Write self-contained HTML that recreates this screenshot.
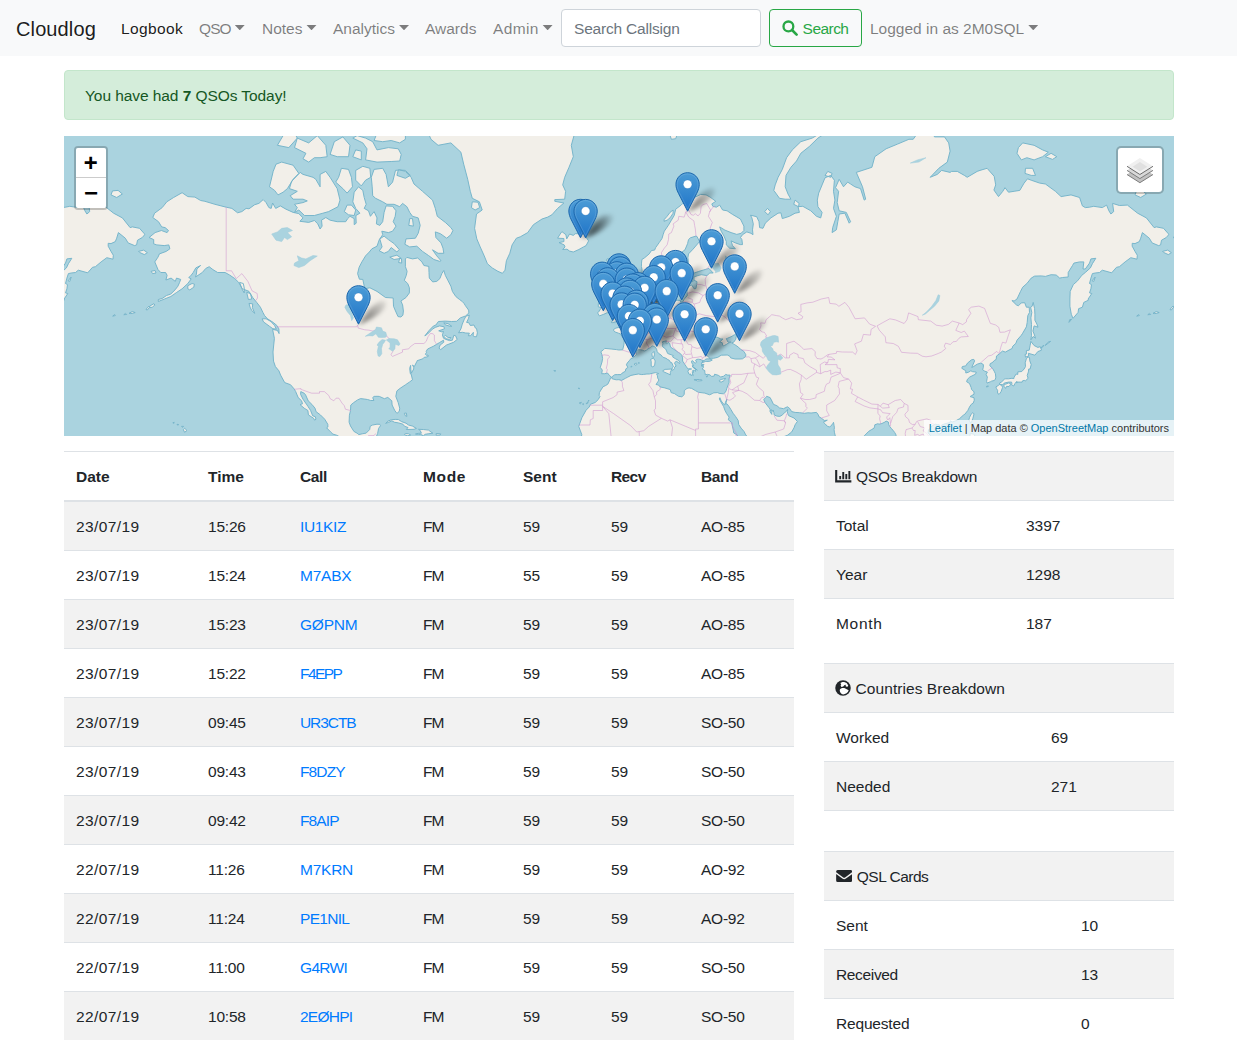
<!DOCTYPE html>
<html lang="en">
<head>
<meta charset="utf-8">
<title>Cloudlog</title>
<style>
*{box-sizing:border-box}
html,body{margin:0;padding:0}
body{width:1237px;height:1063px;overflow:hidden;background:#fff;color:#212529;font-family:"Liberation Sans",sans-serif;font-size:15.5px;line-height:24px;position:relative}
a{color:#007bff;text-decoration:none}
/* navbar */
.navbar{position:absolute;left:0;top:0;width:1237px;height:56px;background:#f8f9fa}
.navbar .it{position:absolute;top:17px;height:24px;line-height:24px;white-space:nowrap;color:rgba(0,0,0,.5)}
.navbar .brand{left:16px;top:14px;height:30px;line-height:30px;font-size:20px;color:rgba(0,0,0,.9)}
.navbar .active{color:rgba(0,0,0,.9)}
.caret{display:inline-block;width:10.4px;height:5.5px;background:currentColor;clip-path:polygon(0 0,100% 0,50% 100%);vertical-align:3.8px;margin-left:3.8px;letter-spacing:0}
.search{position:absolute;left:561px;top:9px;width:200px;height:38px;border:1px solid #ced4da;border-radius:4px;background:#fff;padding:7px 12px 5px;color:#6c757d;line-height:24px;letter-spacing:-.2px}
.btn{position:absolute;left:769px;top:9px;width:93px;height:38px;border:1px solid #28a745;border-radius:4px;color:#28a745;line-height:24px;padding:7px 0 5px 0;white-space:nowrap}
.btn svg{position:absolute;left:11.5px;top:10px}
.btn span{position:absolute;left:32.6px;top:6.5px;letter-spacing:-.55px}
/* alert */
.alert{position:absolute;left:64px;top:70px;width:1110px;height:50px;border:1px solid #c3e6cb;border-radius:4px;background:#d4edda;color:#155724;padding:12.5px 20px 11px;line-height:24px}
/* map */
#map{position:absolute;left:64px;top:136px;width:1110px;height:300px;background:#aad3df;overflow:hidden}
.tiles{position:absolute;left:0;top:0}
.lf-bar{position:absolute;border:2px solid rgba(0,0,0,.2);border-radius:4px;background-clip:padding-box}
.lf-zoom{left:10px;top:10px;width:34px;height:64px}
.lf-zoom a{display:block;width:30px;height:30px;background:#fff;color:#000;text-align:center;font:bold 24px/30px "Liberation Mono","DejaVu Sans Mono",monospace;overflow:hidden}
.lf-zoom .zin{border-bottom:1px solid #ccc;border-radius:2px 2px 0 0;line-height:34px;text-indent:-.5px}
.lf-zoom .zout{border-radius:0 0 2px 2px;line-height:34px;text-indent:.6px}
.lf-layers{right:10px;top:10px;width:48px;height:48px;border-radius:5px;background-color:#fff}
.lf-layers svg{position:absolute;left:9px;top:9px}
.lf-attr{position:absolute;right:0;bottom:0;height:16px;padding:0 5px;background:rgba(255,255,255,.7);color:#333;font:11px/16px "Liberation Sans",sans-serif;white-space:nowrap}
.lf-attr a{color:#0078a8}
/* tables */
table{border-collapse:separate;border-spacing:0;position:absolute;table-layout:fixed}
td,th{padding:13px 12px 11px;height:49px;border-top:1px solid #dee2e6;text-align:left;vertical-align:top;line-height:24px;font-weight:400;white-space:nowrap;overflow:hidden}
th{font-weight:700;border-bottom:2px solid #dee2e6;height:51px}
tr.s td{background:#f2f2f2}
#log tr.f td{border-top:0;height:48px}
#log{left:64px;top:451px;width:730px}
#log tr:last-child td{}
.side{left:824px;width:350px}
.side tr:last-child td{}
.d{letter-spacing:.39px}.t{letter-spacing:-.22px}.fm{letter-spacing:-1px}.b{letter-spacing:-.25px}
td.e{height:1px;padding:0;line-height:0;border-top:1px solid #dee2e6}
.ic{display:inline-block;vertical-align:-1px;margin-right:1px}
.gl{vertical-align:-2.2px;margin-left:-.7px;margin-right:1.5px}.ch{margin-left:-.7px;margin-right:1.7px;vertical-align:-.6px}.en{vertical-align:0;margin-left:-.5px;margin-right:1.5px}
</style>
</head>
<body>
<div class="navbar">
  <a class="it brand" style="letter-spacing:.12px">Cloudlog</a>
  <a class="it active" style="left:121px;letter-spacing:.4px">Logbook</a>
  <a class="it" style="left:199px;letter-spacing:-.9px">QSO<span class="caret"></span></a>
  <a class="it" style="left:262px">Notes<span class="caret"></span></a>
  <a class="it" style="left:333px">Analytics<span class="caret"></span></a>
  <a class="it" style="left:425px">Awards</a>
  <a class="it" style="left:493px;letter-spacing:.34px">Admin<span class="caret"></span></a>
  <div class="search">Search Callsign</div>
  <div class="btn"><svg width="16" height="16" viewBox="0 0 16 16"><circle cx="6.4" cy="6.4" r="4.9" fill="none" stroke="#28a745" stroke-width="2.3"/><path d="M10 10 L14.6 14.6" stroke="#28a745" stroke-width="2.6" stroke-linecap="round"/></svg><span>Search</span></div>
  <a class="it" style="left:870px">Logged in as 2M0SQL<span class="caret"></span></a>
</div>
<div class="alert" style="letter-spacing:-.07px">You have had <b>7</b> QSOs Today!</div>
<div id="map">
<svg class="tiles" width="1110" height="300" viewBox="0 0 1110 300">
<defs>
<g id="world"><path fill="#f2efe9" stroke="#74b3c9" stroke-width=".95" stroke-linejoin="round" d="M85.1 101.5L91.1 96.6L97.4 94.5L103.1 96.6L104.5 94.5L101.1 91.6L97.7 90.9L94.5 85.7L88.8 81.5L90.6 77.2L98.2 71.6L102.8 65.8L109.6 61.5L118.1 56.7L123.8 60.6L130.9 61.1L136.6 64.5L140.9 65.3L150.9 68.3L162.2 71.2L167.9 72.4L173.6 76.8L177.9 75.6L182.1 72.4L185.0 72.8L190.7 68.7L194.9 67.4L199.2 63.6L202.1 66.6L204.9 71.6L207.2 72.4L208.6 67.0L211.7 72.4L216.3 69.9L222.0 73.2L229.1 76.4L234.8 77.6L239.0 81.9L235.9 85.3L244.7 86.4L250.4 84.5L253.8 87.9L256.1 93.0L258.1 90.1L257.5 84.2L261.8 81.5L266.1 84.2L273.2 85.7L281.7 85.7L283.7 82.6L286.0 80.3L290.2 82.6L290.2 88.7L292.2 87.2L291.9 79.5L295.9 77.2L291.7 72.4L288.8 65.8L290.2 56.2L294.5 50.8L298.8 54.4L300.2 61.5L302.2 68.3L300.2 72.4L304.5 74.8L306.4 80.3L310.1 75.6L313.0 81.9L312.4 87.9L315.8 89.4L318.7 85.7L320.1 76.4L322.1 69.9L328.6 70.3L332.0 74.8L331.2 80.3L329.2 85.7L332.0 90.1L328.6 95.2L324.4 96.6L317.8 95.2L318.7 98.7L315.3 103.6L313.0 110.2L307.9 112.8L305.3 116.0L301.6 119.8L297.9 125.9L295.1 131.3L293.6 137.6L295.4 143.2L298.8 143.4L300.8 152.8L305.9 151.8L313.0 155.4L321.5 161.5L329.2 162.0L329.5 170.3L331.5 175.0L334.0 180.6L336.9 181.0L338.9 179.2L339.4 175.0L338.6 168.9L336.9 165.0L342.0 161.5L345.4 156.9L345.4 151.8L343.7 147.5L340.3 144.3L342.3 139.3L343.1 135.3L341.4 130.7L341.4 122.9L342.9 121.4L348.5 122.9L353.7 122.0L357.9 125.9L359.9 129.5L364.8 130.4L365.0 136.5L365.3 142.1L368.7 145.9L372.7 145.4L375.9 142.6L377.8 137.6L379.8 134.5L381.3 139.3L384.1 144.8L386.9 150.2L388.4 155.4L391.8 160.5L395.5 163.5L398.3 165.5L400.0 167.4L401.5 169.8L404.6 174.1L404.9 176.9L401.7 179.9L396.3 181.9L392.6 185.3L387.5 185.5L381.3 185.1L374.4 185.5L371.9 189.0L369.3 190.1L365.0 194.6L360.8 199.9L363.6 198.0L368.5 193.1L371.3 191.4L375.6 189.9L380.1 190.8L380.4 192.9L374.7 194.8L377.8 195.9L379.5 195.5L378.4 198.9L379.5 202.2L381.8 203.4L385.5 204.6L388.4 204.2L389.8 199.3L391.5 199.7L393.2 203.4L389.8 206.2L382.4 209.1L376.7 213.6L375.0 212.2L376.1 209.1L379.8 206.2L379.5 204.2L375.6 206.5L372.7 208.3L369.3 210.3L367.0 211.4L363.6 213.0L362.2 215.4L362.5 216.7L361.3 218.1L362.5 219.4L364.0 219.0L364.3 220.4L362.2 221.1L360.2 221.3L358.8 222.8L353.1 224.7L352.8 225.6L350.3 230.6L348.5 229.0L349.7 231.2L349.7 233.0L347.3 237.3L346.8 233.4L346.6 229.4L345.7 232.3L346.3 237.7L347.1 238.0L348.5 243.8L345.7 245.9L341.6 248.7L336.0 252.4L332.9 254.9L331.8 260.4L334.2 266.6L335.7 272.2L335.3 275.3L333.2 277.1L332.3 276.7L330.6 274.2L328.1 269.0L327.8 264.8L323.8 261.4L320.4 262.7L315.3 260.4L313.0 260.3L310.1 260.4L308.7 261.6L309.9 264.5L306.7 264.5L303.6 263.5L300.8 263.1L296.5 262.6L293.6 263.9L289.4 266.8L286.8 269.0L286.5 274.6L285.4 279.2L285.1 286.2L286.5 290.0L289.9 295.4L293.1 297.2L294.8 298.6L298.8 297.7L302.2 297.1L305.7 293.5L306.2 290.3L308.3 289.1L313.0 288.2L315.7 288.3L316.5 289.7L314.6 292.4L313.6 297.5L312.4 300.5L311.3 305.0L311.6 313.8L301.6 313.8L300.8 309.4L296.2 305.3L292.5 304.5L288.8 306.0L283.1 304.1L279.1 302.5L274.3 300.1L272.6 299.2L268.9 298.1L266.6 295.9L262.6 291.8L263.9 291.0L263.8 288.3L260.7 283.2L256.4 278.9L252.1 275.7L251.0 272.2L247.9 268.4L244.2 264.8L241.6 258.9L240.3 257.3L236.8 255.6L236.6 258.3L239.0 263.2L242.4 268.1L243.9 270.3L246.6 274.5L248.7 279.8L251.3 280.7L252.0 283.2L250.6 284.2L249.6 282.3L244.4 278.9L243.9 274.5L240.2 272.2L236.0 268.6L238.5 267.8L237.6 264.8L234.2 261.6L231.6 255.4L230.1 252.9L226.5 248.7L220.7 246.6L216.6 239.1L214.9 234.8L211.4 230.6L209.5 225.1L209.0 216.0L210.4 202.4L208.6 193.4L213.4 194.4L215.1 197.6L214.9 192.9L212.9 189.5L209.2 186.4L203.5 182.8L200.6 179.6L198.9 176.4L196.4 171.2L192.7 166.4L188.7 161.5L185.0 155.4L178.2 152.6L174.7 146.4L170.8 142.6L165.6 139.0L161.1 136.5L153.7 136.5L148.9 133.6L145.2 130.7L141.8 132.4L138.3 136.5L131.5 141.0L132.4 138.2L132.9 133.0L136.6 129.5L131.8 131.9L129.2 136.5L126.7 139.9L124.7 141.5L127.2 142.9L123.8 147.5L118.1 152.8L112.7 156.4L106.8 160.5L100.5 163.0L94.3 165.5L94.3 163.5L98.2 162.5L102.5 159.5L106.8 158.0L111.0 153.9L113.9 150.2L115.6 146.4L116.7 143.4L112.5 142.1L111.3 145.4L107.1 142.1L101.9 144.0L103.1 139.3L101.6 136.5L96.8 136.5L94.0 133.6L90.8 125.9L94.0 121.1L95.4 117.9L102.2 115.4L105.9 112.8L104.8 108.9L100.2 109.6L92.8 108.9L89.7 107.9L89.7 103.6ZM537.7 237.7L538.3 234.1L536.3 231.4L538.0 226.0L538.6 222.5L538.0 218.8L536.8 215.8L539.4 213.8L540.8 212.4L547.1 213.0L552.5 213.6L554.8 214.0L558.7 213.8L559.9 208.9L560.2 205.0L559.9 202.8L557.6 200.1L557.0 198.2L554.5 197.2L550.9 195.9L549.8 194.8L549.6 193.4L551.9 192.1L554.8 191.4L557.6 192.3L559.0 192.3L558.7 189.9L557.8 187.7L559.7 187.7L560.2 189.2L562.4 189.5L563.6 188.6L566.4 186.6L567.9 185.1L567.9 183.0L568.6 182.1L570.1 181.7L571.5 180.8L573.3 179.9L575.0 177.3L576.8 172.9L578.7 171.5L582.9 170.8L586.1 169.3L587.5 170.1L588.0 168.4L588.9 168.4L588.3 166.4L588.6 165.5L586.9 163.5L587.2 160.5L586.3 158.0L586.6 154.4L587.8 152.3L591.6 149.7L593.5 148.9L593.3 150.7L592.6 153.3L594.3 155.7L592.5 157.2L591.2 160.5L590.3 164.0L592.3 165.9L594.9 165.9L594.3 168.1L595.9 168.4L597.7 167.2L598.9 165.7L602.0 165.0L603.7 168.1L607.5 166.9L610.2 165.2L613.1 164.2L616.8 164.5L616.3 166.2L618.8 165.9L620.2 163.2L623.3 159.5L623.0 155.4L624.6 150.7L627.6 148.9L630.1 152.8L631.9 152.6L632.7 148.6L633.0 145.6L630.1 144.3L629.9 141.0L633.7 139.6L637.3 138.7L642.9 139.6L645.8 137.0L649.2 137.0L644.9 132.4L639.8 133.9L634.3 135.6L628.6 137.6L626.4 134.2L623.9 130.7L624.5 127.1L623.9 121.7L624.5 117.9L629.0 113.2L635.5 105.6L633.0 100.5L631.9 100.1L626.4 101.8L624.5 103.6L623.6 107.6L621.0 113.8L616.8 117.0L614.5 121.1L612.8 122.3L612.2 126.5L612.2 132.4L615.9 134.8L617.1 137.0L615.4 140.4L614.4 142.6L611.1 144.3L610.8 148.9L609.9 154.6L607.7 157.2L604.0 160.2L602.6 161.0L600.7 161.2L600.3 160.0L599.4 157.7L598.7 156.4L599.9 154.6L597.1 149.1L595.2 145.6L595.0 142.4L594.4 141.0L593.7 137.0L592.9 139.9L591.9 142.1L590.0 142.9L588.3 145.1L586.1 146.7L583.4 147.5L582.1 147.0L580.4 145.1L579.2 142.4L578.2 139.9L578.1 134.2L577.4 130.4L577.5 127.1L577.9 123.5L580.7 121.7L585.2 117.9L587.5 114.5L590.6 114.1L591.7 111.5L595.2 106.6L598.0 102.5L599.1 98.7L600.3 95.2L604.3 89.4L607.4 84.2L610.2 79.5L611.7 73.2L617.1 69.1L618.8 67.4L622.5 66.6L624.5 65.3L628.7 62.3L636.7 58.4L642.1 58.9L646.1 61.1L651.8 65.3L647.8 67.9L648.8 70.3L652.3 71.2L655.7 69.1L658.6 74.0L663.1 74.8L668.5 78.4L676.4 83.0L679.9 90.1L679.9 94.5L677.1 97.3L672.8 98.4L667.1 96.6L660.9 94.1L655.7 90.9L657.2 95.2L660.0 100.1L662.3 105.6L662.3 108.9L665.7 112.2L671.4 112.8L668.5 109.6L667.1 104.9L671.4 106.9L676.2 108.6L678.5 108.6L677.9 103.6L676.5 101.5L678.5 98.7L682.8 95.9L687.0 97.3L689.0 98.7L688.5 93.8L689.3 87.9L687.9 81.9L686.5 79.2L692.7 80.7L695.0 85.7L695.6 91.6L699.0 92.3L701.3 87.2L706.9 81.9L714.1 77.2L716.9 76.8L718.3 82.6L725.4 80.3L731.1 77.2L735.4 76.4L734.0 70.7L738.8 70.3L746.8 74.8L752.5 80.3L756.7 81.9L758.1 76.4L753.9 70.7L753.3 64.1L754.7 57.1L758.1 48.9L761.0 41.8L766.7 39.4L770.4 44.2L769.5 55.3L770.9 64.1L769.5 72.4L772.4 80.3L768.7 91.6L768.1 96.6L772.4 93.8L773.8 85.7L775.2 78.0L780.9 77.2L785.2 87.2L786.6 85.7L782.3 76.4L775.2 74.8L773.2 66.6L774.6 55.3L771.5 51.7L775.2 43.3L779.5 50.8L783.7 46.1L786.6 48.0L790.9 50.8L796.5 52.6L800.2 64.1L801.7 63.2L798.5 50.8L792.3 36.4L807.9 31.3L810.8 20.7L822.1 12.8L833.5 8.1L844.9 3.3L849.2 3.3L860.0 -12.0L866.2 -8.0L870.5 0.9L880.5 0.9L884.7 6.9L886.1 15.1L883.3 26.1L874.8 32.3L866.2 41.3L873.3 38.4L877.6 34.4L886.1 36.4L887.6 35.4L893.3 35.4L900.4 39.4L903.2 41.3L913.2 35.4L916.0 34.4L923.1 32.3L930.2 40.3L931.7 48.9L929.9 54.0L934.5 60.6L938.8 55.3L941.0 51.7L944.5 56.2L950.1 55.3L955.8 54.4L960.1 47.1L963.5 42.8L967.2 44.2L975.7 47.1L981.4 48.0L991.4 55.3L997.1 60.6L1007.0 58.9L1015.6 61.5L1018.4 69.9L1021.3 71.6L1025.5 71.2L1029.8 70.3L1038.3 71.6L1042.6 69.1L1044.9 74.8L1046.9 78.0L1049.7 75.6L1048.6 67.4L1055.4 69.5L1063.4 69.1L1073.6 77.2L1082.4 81.9L1090.1 91.6L1092.4 90.9L1099.5 92.3L1104.3 97.7L1104.7 98.7L1102.3 101.5L1097.5 104.2L1096.6 108.9L1094.6 109.6L1088.1 106.9L1085.3 102.2L1078.4 96.6L1076.7 102.2L1075.3 105.6L1071.0 107.6L1068.2 107.3L1068.2 110.2L1071.0 115.4L1073.3 119.2L1073.0 123.2L1066.8 121.7L1061.1 125.9L1055.4 130.7L1052.5 131.3L1047.7 136.8L1038.3 134.2L1035.5 136.5L1031.2 137.0L1028.4 137.6L1026.9 142.1L1025.5 147.5L1027.5 148.6L1026.9 152.8L1025.5 156.9L1027.8 157.5L1024.1 163.0L1024.4 164.2L1019.8 166.4L1018.4 171.2L1014.6 172.7L1014.1 176.4L1009.0 182.4L1007.3 178.3L1005.9 170.3L1005.9 163.0L1006.2 155.4L1009.3 148.6L1013.6 144.8L1017.8 139.3L1021.3 136.5L1026.4 131.9L1028.4 127.7L1031.8 122.3L1026.9 122.9L1025.5 127.1L1021.3 133.0L1019.0 133.0L1019.8 125.9L1015.6 125.9L1009.9 127.1L1008.5 129.5L1004.2 136.5L1004.2 141.0L998.5 141.5L995.7 142.1L992.2 139.0L987.1 138.7L981.4 140.4L977.2 139.9L970.6 140.1L967.2 142.1L962.9 147.5L958.7 151.2L956.4 155.7L953.0 163.0L950.1 165.0L947.9 164.5L952.4 168.9L954.4 169.8L957.3 166.9L960.7 166.7L962.4 171.2L965.2 171.2L965.5 176.4L963.8 179.6L963.2 186.4L962.4 190.8L958.7 197.2L957.3 199.3L953.0 204.2L951.9 207.3L948.7 210.3L948.2 212.4L941.3 216.1L938.5 215.0L935.1 218.1L932.5 220.0L932.2 223.4L930.8 224.2L928.0 226.8L926.3 227.5L925.8 229.7L928.5 232.3L930.2 235.2L931.4 237.7L931.8 241.2L931.4 243.0L930.5 244.4L927.4 245.2L926.5 245.7L923.1 247.1L922.6 245.4L923.1 242.6L923.4 241.2L922.1 238.4L923.4 236.1L920.8 235.2L918.6 233.7L919.3 231.5L919.4 228.6L916.9 227.0L913.2 228.2L909.2 230.8L907.8 231.4L909.2 228.2L910.6 224.9L909.8 223.4L907.5 223.8L903.5 227.1L901.8 229.9L898.4 230.5L897.8 232.3L901.8 234.8L901.8 237.0L904.6 236.2L906.8 234.8L908.6 235.7L910.9 235.9L912.3 236.2L911.5 238.2L905.8 241.0L903.4 243.3L902.6 245.7L905.5 247.5L907.2 251.6L907.5 253.3L910.0 255.9L910.0 258.3L907.5 259.6L906.1 260.6L910.0 261.7L910.3 264.2L909.2 267.1L907.2 268.4L905.5 271.0L903.8 274.5L901.8 277.0L900.9 278.2L899.2 279.3L895.4 282.8L891.8 284.8L888.1 286.0L886.4 284.8L886.1 286.5L881.9 287.5L879.0 288.5L877.3 289.4L876.8 292.3L875.6 291.8L875.3 288.8L873.6 288.6L871.4 288.2L870.5 288.5L867.1 290.6L866.5 292.4L864.5 293.8L864.1 296.9L866.2 299.3L866.7 300.7L867.9 302.0L869.4 303.4L871.1 304.7L871.9 316.7L841.2 316.7L840.9 303.5L838.9 301.1L837.2 303.5L834.7 305.6L831.2 305.0L831.8 302.0L832.1 299.0L830.7 296.5L829.4 294.8L827.5 292.6L825.8 290.6L824.8 288.8L824.4 286.0L822.1 285.1L821.0 286.0L817.9 287.5L815.0 288.2L813.9 287.7L810.8 288.8L810.5 290.9L809.9 292.3L807.5 293.6L804.8 295.3L800.2 299.9L797.4 302.2L797.1 303.5L794.3 304.5L791.4 316.7L776.1 316.7L773.2 306.5L771.8 302.0L770.4 296.2L770.1 293.6L770.4 291.8L770.1 289.7L769.5 286.3L768.7 287.7L766.7 290.3L765.3 290.9L763.4 290.3L761.3 288.0L759.4 286.2L763.3 284.2L760.6 284.5L758.1 282.9L757.3 282.0L755.3 281.1L753.9 278.2L752.5 276.4L747.1 277.0L743.9 276.8L740.5 277.3L735.7 276.7L731.1 276.4L727.7 275.6L725.4 272.2L723.4 270.8L719.5 272.7L715.5 271.9L712.9 269.7L709.5 268.4L707.9 265.0L706.1 261.6L702.7 260.3L701.5 261.7L699.8 263.5L701.0 266.5L704.7 271.3L706.1 273.2L706.1 275.7L707.8 278.4L707.8 276.0L709.1 274.0L709.9 276.7L710.1 278.9L712.9 280.1L715.8 280.4L718.0 279.2L720.6 276.7L722.6 275.1L723.7 273.4L723.4 275.7L723.6 277.3L724.7 279.7L730.0 282.0L733.4 285.4L731.1 288.8L730.0 291.8L727.7 296.0L723.4 299.3L720.3 300.5L717.2 302.0L711.8 306.2L705.5 316.7L686.5 316.7L685.3 307.9L684.8 303.8L684.3 302.3L681.3 298.1L680.2 295.7L677.1 292.1L674.7 288.5L674.2 284.5L671.5 280.4L669.1 277.3L667.0 273.7L664.8 270.2L662.9 267.8L661.7 268.1L662.9 263.1L661.4 266.5L660.7 268.9L658.9 267.3L657.2 264.8L655.9 261.7L655.3 262.9L657.5 267.0L659.6 270.5L660.9 274.2L662.6 277.5L665.1 281.1L664.3 283.8L667.5 286.3L669.3 294.2L669.7 296.9L673.1 299.0L675.5 306.2L679.9 316.7L514.9 316.7L513.5 308.8L516.4 305.0L517.8 298.7L516.4 294.8L514.8 290.6L515.2 289.1L517.9 281.7L522.1 274.2L525.2 271.0L526.6 268.2L531.2 266.5L534.3 263.5L536.0 260.3L535.1 259.4L535.4 256.6L537.0 253.9L539.1 250.7L541.7 249.5L543.8 248.2L545.8 244.0L546.5 241.9L548.2 241.6L548.2 242.8L552.2 243.8L554.9 243.7L557.6 244.4L561.5 242.3L563.6 241.2L567.0 239.4L572.0 238.4L574.4 238.0L577.8 238.6L579.7 238.4L582.9 238.0L585.3 238.0L591.3 236.6L594.7 237.5L592.6 238.4L593.5 239.8L593.6 241.9L594.9 244.0L593.9 245.7L592.0 248.5L594.6 249.0L596.0 250.9L600.8 251.9L606.3 253.6L607.1 256.6L610.5 257.6L614.5 260.3L617.9 260.8L620.2 258.6L620.3 254.6L623.0 252.4L625.0 251.9L627.7 252.4L631.4 254.6L634.4 256.3L640.8 257.1L645.6 258.8L648.3 257.6L649.8 256.8L653.8 256.6L655.2 257.4L659.4 257.8L661.1 256.6L662.1 254.8L662.9 252.2L664.3 248.5L665.1 246.6L665.0 243.0L666.1 239.1L663.7 239.1L661.7 238.4L659.7 240.2L656.7 241.0L654.3 239.3L650.6 238.2L650.1 240.2L649.1 240.2L647.6 240.5L646.1 238.9L643.7 238.4L641.2 238.7L641.2 237.5L640.8 236.4L640.8 234.6L638.1 233.0L639.4 231.7L639.2 229.4L640.0 228.4L637.4 228.6L637.8 226.8L641.5 225.5L642.8 225.5L645.8 225.3L648.3 224.0L645.9 223.0L646.2 222.3L649.5 222.3L653.8 221.3L657.2 219.2L663.3 219.0L665.7 220.2L666.7 221.9L671.1 223.0L676.2 223.0L678.5 222.8L681.6 220.6L681.8 218.7L679.9 215.4L676.2 213.0L674.4 211.1L670.8 208.7L669.4 207.9L667.7 206.9L669.7 206.2L671.8 203.2L672.1 200.5L675.1 198.4L673.9 198.4L670.1 198.9L668.0 200.3L663.7 202.2L662.3 202.6L664.0 206.2L667.1 206.0L664.0 207.3L662.9 208.1L660.4 209.5L659.2 209.9L658.6 209.1L658.2 206.7L655.7 206.0L658.9 203.0L656.9 203.0L652.9 201.1L650.8 201.3L650.1 203.0L647.8 206.7L644.8 210.7L644.7 212.2L644.2 214.0L642.7 214.6L641.5 217.3L642.9 219.6L645.8 222.1L645.6 223.0L643.7 222.8L641.5 223.2L640.4 224.5L639.1 225.3L637.8 226.4L639.5 224.5L637.4 224.2L637.0 223.6L634.4 223.2L632.7 223.4L631.6 224.2L632.6 226.2L631.4 227.0L630.7 227.0L628.4 224.5L627.6 225.1L627.7 226.8L629.7 229.7L628.4 229.4L628.6 231.0L631.6 233.4L631.6 235.3L630.4 234.3L628.7 234.4L629.1 235.5L630.0 236.2L628.2 235.7L628.7 238.0L629.3 239.6L628.0 238.4L627.3 239.8L626.2 237.7L625.6 238.7L624.9 238.0L623.9 235.3L625.0 233.2L627.6 233.0L624.2 232.8L623.0 231.9L622.3 230.6L620.9 228.6L620.2 227.3L618.6 225.1L618.6 221.9L617.9 219.6L616.5 217.7L614.8 216.7L610.1 213.4L606.5 211.1L605.7 207.5L604.3 206.2L602.7 208.1L602.0 207.1L602.4 204.8L598.4 205.8L598.9 207.7L598.3 209.9L599.1 211.2L601.7 213.0L603.7 217.5L609.4 219.6L608.5 220.8L611.2 222.6L614.4 224.3L615.9 226.2L615.5 227.5L614.5 226.6L612.2 225.1L610.5 227.1L612.1 230.1L610.5 231.2L610.4 232.6L609.0 234.3L607.8 233.7L608.4 231.7L609.4 230.8L608.8 229.2L607.7 226.6L606.8 226.8L605.3 224.3L603.8 223.6L602.0 222.3L599.1 221.3L598.0 220.2L596.9 218.8L594.9 217.7L593.2 215.6L592.6 213.2L591.2 211.1L588.8 209.9L587.5 210.3L586.1 211.8L584.1 212.6L582.2 214.4L580.2 215.0L578.5 214.2L576.7 213.8L573.8 213.8L572.1 215.0L572.0 217.1L572.7 218.1L569.6 221.5L566.9 222.6L565.7 224.2L563.3 227.0L562.4 228.8L563.9 231.4L561.9 232.8L561.3 235.3L558.2 237.0L557.0 238.6L553.3 238.6L550.8 238.7L548.1 240.7L547.4 241.2L545.4 239.4L543.5 237.0L540.8 237.7ZM345.7 110.9L340.9 108.3L342.0 102.9L351.4 102.2L354.2 97.3L356.2 89.4L354.2 81.9L348.5 80.3L345.7 76.4L342.9 70.7L338.6 67.4L335.7 70.7L330.1 68.3L322.9 68.3L318.7 65.8L311.6 62.3L308.7 59.7L308.2 50.8L307.3 41.3L310.1 33.4L318.7 32.3L322.1 38.4L324.4 50.8L328.6 46.1L331.5 34.4L335.7 33.9L341.4 35.4L347.1 41.3L350.0 48.0L358.5 55.3L368.5 64.1L371.3 72.4L373.3 80.3L381.3 86.4L386.9 91.6L388.9 94.5L386.9 98.7L382.7 102.2L376.4 97.7L371.3 95.9L371.9 101.5L377.0 106.9L379.0 112.2L379.8 117.3L374.1 117.3L368.5 113.8L372.7 119.8L377.0 124.7L375.6 125.3L369.9 123.5L364.5 119.5L358.5 115.4L352.8 110.2ZM230.5 76.4L234.8 74.0L240.5 79.5L250.4 79.5L258.9 77.2L264.6 75.6L274.0 70.7L276.0 64.1L273.2 52.6L266.1 41.3L261.8 35.4L256.1 38.4L256.1 50.8L251.8 43.3L249.0 41.3L239.0 38.4L236.2 36.4L227.7 45.2L225.4 52.6L233.3 55.3L226.2 59.7L229.1 63.2L239.0 63.2L243.3 64.9L239.0 66.6L230.5 68.3L233.3 71.6ZM205.5 50.8L209.2 35.4L212.0 28.2L217.7 26.1L229.1 29.2L234.8 37.4L229.1 43.3L223.4 52.6L219.1 56.2L214.0 58.9L210.6 54.4ZM230.5 11.6L233.3 2.1L244.7 6.9L253.3 -0.4L261.8 9.3L263.2 20.7L256.1 21.7L250.4 21.7L244.7 26.1L239.0 22.8L241.9 17.3ZM266.1 18.4L273.2 20.7L284.5 20.7L286.0 9.3L278.9 0.9L270.3 5.7ZM288.8 20.7L297.3 23.9L297.3 15.1L291.7 13.9ZM301.6 23.9L313.0 26.1L327.2 25.5L335.7 25.0L337.2 18.4L334.3 12.8L324.4 11.6L313.0 13.9L308.7 5.7L301.6 2.1L293.1 -0.4L288.8 2.1L298.8 6.9L303.0 12.8ZM310.1 4.5L318.7 5.7L327.2 4.5L335.7 6.9L341.4 3.3L341.4 -2.9L347.1 -16.0L350.0 -45.9L301.6 -45.9L307.3 -16.0L313.0 -2.9ZM291.7 44.2L297.3 49.9L301.6 44.2L306.7 41.3L305.9 32.3L298.8 30.3L291.7 34.4ZM271.7 46.1L278.9 52.6L283.1 57.1L288.5 50.8L287.4 41.3L284.5 33.4L277.4 32.3L274.6 41.3ZM280.3 75.6L284.5 78.8L290.2 79.5L291.7 74.0L287.4 69.1L283.1 69.1ZM315.8 102.9L320.1 100.1L324.4 103.6L330.1 107.6L335.2 113.5L332.9 116.0L327.2 111.5L324.4 115.4L320.1 117.3L315.3 114.8L318.1 110.9ZM325.8 121.1L330.1 123.5L337.2 122.3L332.9 119.2ZM334.6 126.5L337.7 127.1L337.5 122.9L335.7 122.3ZM344.8 89.4L349.4 90.1L348.5 82.6L345.7 82.6ZM332.9 39.4L341.4 42.3L346.3 39.4L341.4 34.4L334.3 33.9ZM213.4 9.3L224.8 11.6L233.3 2.1L227.7 -8.0L219.1 -0.4ZM394.6 196.8L396.9 192.9L398.3 188.1L400.3 183.3L402.0 180.1L405.4 179.2L404.3 182.8L402.6 186.4L404.9 186.8L406.3 189.5L410.0 189.0L411.4 192.1L412.5 192.5L413.4 196.8L412.5 200.7L410.8 200.7L409.1 199.9L409.4 196.3L406.6 199.7L404.3 199.7L405.4 197.2L401.7 197.0L398.3 196.3ZM379.8 186.8L384.1 187.7L387.8 190.3L385.5 190.1L381.3 188.8ZM380.1 200.5L381.3 199.3L384.1 201.5L386.9 201.5L385.5 203.4L382.1 202.8ZM198.1 182.8L202.1 182.8L206.9 185.5L210.6 189.5L212.3 193.1L208.9 192.7L205.5 190.3L199.5 185.9ZM185.0 167.4L188.7 167.9L188.4 171.7L190.7 177.3L187.8 174.6L186.1 171.2ZM123.8 149.7L128.1 147.5L130.4 148.1L129.8 151.2L125.8 153.9L123.8 152.8ZM182.7 156.4L186.4 157.5L187.8 163.0L184.4 163.5ZM175.6 146.4L179.3 147.5L180.4 152.8L180.2 156.9L177.9 152.8ZM74.6 115.4L79.7 114.1L83.4 116.7L80.3 118.6L75.5 116.4ZM87.1 135.3L91.1 134.5L92.0 137.0L88.6 137.6ZM85.7 170.1L90.0 167.6L90.8 169.1L88.3 171.2L86.0 171.7ZM82.0 173.4L84.9 170.1L85.7 171.2L83.2 174.1ZM65.0 177.3L68.4 175.5L71.2 176.6L66.9 177.6ZM59.8 178.7L61.5 177.3L62.7 178.5ZM48.7 180.1L50.7 178.5L51.3 179.6ZM119.4 293.8L120.7 292.3L123.0 294.5L120.6 296.3ZM117.6 290.3L119.6 290.4L118.4 291.4ZM113.0 288.3L114.7 288.6L113.6 289.2ZM108.8 286.8L110.2 286.3L109.9 287.4ZM321.7 287.4L323.8 285.2L327.2 283.8L331.2 283.4L334.3 283.5L337.7 285.7L342.0 287.2L344.6 289.1L348.3 290.0L352.4 292.4L350.0 293.3L342.3 293.5L344.0 291.5L340.6 290.3L338.9 288.2L334.6 286.9L330.6 286.3L327.8 284.8L324.7 286.3ZM351.5 298.0L354.5 298.3L356.8 298.4L359.4 299.8L361.1 298.3L364.2 297.8L368.9 297.2L367.0 296.0L364.5 294.1L359.4 293.5L354.5 293.3L356.2 294.5L357.4 297.2L354.2 297.4ZM340.4 298.3L341.7 297.5L344.6 297.8L346.6 299.0L343.7 299.8L341.1 299.0ZM372.2 297.5L376.7 297.8L376.1 299.0L372.2 299.2ZM340.3 277.3L342.3 277.0L342.9 280.4L341.4 279.8ZM358.5 -16.0L367.0 3.3L374.1 9.3L386.9 6.9L396.9 16.2L399.7 28.2L403.7 43.3L406.3 55.3L408.3 62.3L415.4 65.8L418.2 74.0L412.5 78.0L410.6 92.3L412.8 102.9L416.2 110.9L420.2 119.8L423.4 127.7L428.2 131.9L433.9 135.3L438.4 137.3L441.0 134.2L442.4 124.7L445.8 117.3L448.1 108.9L452.4 102.2L456.3 100.8L463.7 96.6L469.4 88.7L478.0 83.0L483.7 81.1L487.9 78.8L493.6 72.4L499.9 67.0L490.8 65.3L490.8 63.6L500.7 63.2L501.6 55.3L498.7 48.9L500.7 41.3L505.0 31.3L509.3 20.7L507.3 9.3L510.7 -2.9L512.1 -45.9L358.5 -45.9ZM407.4 71.6L411.1 74.0L415.7 71.6L414.0 66.2L408.3 65.8ZM493.6 102.2L496.2 98.0L497.9 95.6L501.9 98.7L502.7 102.9L505.6 98.0L509.3 99.4L511.2 97.7L514.9 97.7L517.2 95.2L521.8 96.3L521.8 100.8L524.6 104.9L522.1 109.6L519.5 110.9L514.9 113.5L509.3 116.0L505.6 115.1L503.0 113.2L498.7 113.5L501.0 110.9L500.2 108.9L495.0 106.6L499.9 105.6L499.9 102.5ZM547.1 186.2L548.5 186.6L552.9 185.5L556.3 184.2L559.6 183.7L564.0 183.0L566.0 182.4L567.1 181.2L567.4 180.1L565.3 179.6L566.1 178.3L567.9 176.9L568.3 175.0L567.0 172.9L564.2 173.4L564.3 172.2L563.6 169.8L563.0 167.4L561.6 165.5L560.2 164.7L559.3 163.0L557.6 159.2L557.2 158.5L554.2 158.0L555.9 156.4L555.1 155.7L557.5 152.0L558.2 150.2L557.6 149.1L551.4 150.2L552.5 148.3L554.6 145.1L554.8 144.0L553.6 144.0L549.1 144.3L548.2 146.4L546.8 149.7L547.1 151.2L545.7 154.4L547.7 155.9L546.8 161.5L549.1 158.5L550.1 160.7L549.1 163.0L549.5 164.7L553.1 163.5L554.8 163.2L553.1 165.5L555.1 167.4L554.6 168.9L554.8 170.8L552.5 171.2L550.2 171.2L549.8 173.6L551.6 175.0L549.9 176.9L548.2 177.8L548.8 179.0L551.4 179.4L554.2 179.9L555.6 179.4L554.8 180.6L553.1 181.0L550.5 181.9L549.1 184.4ZM542.3 161.0L545.8 162.0L547.1 164.5L547.8 165.9L545.4 167.9L545.9 171.0L546.2 172.9L545.2 176.6L543.4 176.6L539.7 178.3L535.4 179.9L533.6 176.9L535.7 174.6L535.1 174.8L537.7 171.7L534.3 170.8L534.3 167.9L534.9 166.4L538.8 166.4L539.7 165.0L538.3 164.5L539.7 162.2ZM541.7 152.8L543.1 152.8L545.7 146.4L545.4 144.8L543.1 147.0ZM544.2 150.7L546.2 152.3L547.1 151.2L545.4 149.1ZM545.1 156.4L547.1 155.9L545.9 154.6ZM553.6 142.6L555.6 142.6L555.9 140.4L553.9 141.0ZM558.7 137.0L560.5 135.9L561.0 131.9L559.0 133.6ZM542.3 124.7L544.5 125.3L545.1 122.9L543.1 122.9ZM600.0 85.3L603.1 84.2L606.0 81.9L609.1 77.2L609.1 74.0L606.0 76.4L603.1 80.3L600.3 83.4ZM594.9 159.5L596.9 158.2L599.1 157.7L599.1 160.0L598.0 162.0L597.7 164.5L594.6 164.2L595.2 162.0ZM591.2 160.5L593.7 160.2L594.0 162.5L592.3 162.7ZM615.1 152.3L616.8 151.2L618.2 147.8L616.5 148.1L614.8 150.7ZM609.9 156.9L611.9 151.0L611.4 151.2L609.9 154.9ZM625.6 146.4L629.3 145.1L628.7 144.3L625.9 144.5ZM626.2 142.6L628.4 143.2L628.7 141.8L627.3 141.5ZM619.1 135.9L621.0 136.2L621.0 134.2L619.3 134.2ZM605.1 162.5L606.4 162.7L606.3 161.5L605.3 161.5ZM709.8 54.4L715.5 62.3L721.2 63.2L726.9 63.2L724.0 58.0L721.2 50.8L722.0 39.4L726.9 31.3L732.5 25.0L736.8 17.3L745.3 10.5L753.9 2.1L759.6 -1.6L756.7 -2.9L748.2 2.1L736.8 5.7L728.3 13.9L722.6 21.7L718.3 33.4L714.1 41.3L711.2 48.9ZM700.7 75.6L704.1 78.8L706.4 75.6L703.5 72.4ZM729.7 68.3L734.5 70.7L735.1 67.4L731.1 64.1ZM761.0 39.4L766.7 41.3L768.1 37.4L763.8 35.4ZM953.0 17.3L957.3 23.9L962.9 21.7L970.1 23.9L978.6 20.7L984.3 16.2L978.6 13.9L970.1 9.3L958.7 6.9L954.4 11.6ZM961.0 37.4L967.2 39.4L971.5 39.4L968.6 32.3L961.5 32.3ZM981.4 20.7L988.5 23.4L992.8 20.7L987.1 17.3ZM1071.0 58.9L1076.7 61.5L1082.4 58.0L1078.1 54.4L1072.5 54.9ZM607.4 3.3L611.7 2.7L615.9 -9.3L623.0 -23.0L608.8 -45.9L594.6 -38.0L601.7 -13.3ZM624.5 -6.7L631.6 -6.7L628.7 -18.8L623.0 -16.0ZM1028.1 144.8L1031.2 141.0L1029.8 145.4ZM966.9 203.8L969.2 200.5L971.5 202.2L970.1 198.0L968.9 195.1L970.1 189.9L974.0 191.2L972.9 188.1L970.9 184.2L970.9 178.3L970.6 172.7L969.2 166.4L968.1 170.3L966.6 171.2L967.8 176.4L966.9 181.9L967.5 188.6L967.2 195.1L967.5 199.3ZM961.5 221.1L964.7 220.0L964.4 217.3L970.9 219.2L973.8 215.6L977.5 214.2L976.3 210.7L973.8 211.4L970.1 209.5L966.9 205.4L966.1 209.5L965.2 214.2L962.4 214.6L962.4 218.1L961.0 218.5ZM935.6 248.3L938.8 248.8L940.2 247.1L944.5 246.1L947.6 246.1L947.9 247.5L947.6 248.8L949.6 250.0L951.0 247.5L952.7 245.4L952.7 247.1L953.0 246.1L956.4 246.1L958.1 246.1L958.7 244.7L960.7 244.4L961.2 245.1L964.1 242.3L963.2 239.4L964.4 235.9L964.7 233.0L966.1 233.0L967.2 228.6L965.8 224.9L965.5 221.5L964.1 221.1L962.4 222.6L961.2 226.8L961.5 230.5L960.1 233.0L957.8 235.5L953.8 235.9L953.8 238.4L952.1 238.0L950.1 241.2L949.9 242.6L947.9 242.3L944.5 242.8L941.6 242.8L940.5 243.1L937.6 245.9L935.6 247.0ZM940.2 248.2L941.6 248.2L944.5 247.0L946.4 247.5L946.4 248.8L945.0 250.5L942.5 250.4L941.6 252.4L939.9 250.2ZM931.9 250.9L934.2 249.5L935.6 248.5L937.9 249.5L938.5 251.6L937.1 255.6L935.9 257.3L935.1 258.3L933.6 257.3L933.6 254.3L932.5 252.6ZM977.2 212.2L980.0 209.5L978.6 209.9ZM981.1 209.5L986.6 205.4L984.0 206.2ZM1005.0 186.4L1007.6 183.3L1005.6 183.7ZM904.9 283.8L906.6 286.9L907.2 286.9L908.9 282.3L910.0 277.9L908.9 276.7L907.5 277.6L905.5 281.4ZM872.5 295.4L874.8 298.4L877.6 296.6L879.0 293.9L877.9 292.7L874.8 293.3ZM905.5 305.0L905.8 300.5L906.3 297.5L910.0 298.1L911.2 301.1L910.9 304.1L909.2 305.3L909.5 310.9L906.1 310.9ZM922.1 250.5L924.3 249.9L924.3 250.5L922.6 250.9ZM598.7 234.8L601.1 233.4L607.7 233.0L606.3 236.6L606.3 238.9L604.0 237.7L599.4 235.7ZM586.6 223.4L589.5 222.1L591.2 224.9L590.6 229.7L588.6 230.8L587.2 230.1L587.2 225.6ZM587.8 217.7L590.0 215.4L590.5 218.8L589.5 221.5L588.3 220.8ZM630.1 243.7L632.1 243.5L635.3 243.5L638.1 244.0L637.8 244.7L633.6 244.9L630.1 243.8ZM655.2 244.5L657.2 243.5L661.6 242.3L660.0 244.7L657.2 246.1L655.5 245.6ZM570.0 228.2L572.1 227.0L573.1 227.9L572.1 229.4ZM574.1 226.8L575.5 227.0L575.0 227.3ZM566.7 230.8L567.9 230.1L567.6 231.0ZM628.7 230.8L633.3 234.1L632.1 233.2L630.4 231.9ZM642.1 240.7L643.7 239.6L643.2 240.9ZM637.0 229.7L639.0 229.2L638.7 230.5ZM515.2 267.0L517.4 266.3L516.4 267.9ZM518.4 268.1L519.5 267.6L519.5 268.7ZM522.1 267.8L523.9 265.8L523.9 267.1ZM523.9 265.2L525.0 264.2L524.9 264.8ZM514.2 252.2L515.8 252.4L515.2 252.8ZM489.8 234.6L491.8 234.8L490.8 235.2ZM706.8 274.5L707.4 273.7L707.2 274.9Z"/></g>
<linearGradient id="mg" x1="0" y1="0" x2="0" y2="1"><stop offset="0" stop-color="#4c9cd6"/><stop offset="1" stop-color="#1f74c8"/></linearGradient>
<linearGradient id="sg" gradientUnits="userSpaceOnUse" x1="0" y1="0" x2="26" y2="-24"><stop offset="0" stop-color="#000" stop-opacity=".5"/><stop offset=".45" stop-color="#000" stop-opacity=".36"/><stop offset="1" stop-color="#000" stop-opacity=".08"/></linearGradient>
<filter id="bl" x="-50%" y="-50%" width="200%" height="200%"><feGaussianBlur stdDeviation="2"/></filter>
<g id="sh"><path d="M0 0 L8 -12 C11 -17 19 -23 24 -24 C28.5 -24.5 28.5 -20 25 -15.5 C20 -9.5 12 -4.5 0 0Z" fill="url(#sg)" filter="url(#bl)"/></g>
<g id="mk"><path d="M12.5 40.2 L3.4 22.4 C1.7 19.1 .85 16.3 .85 13.4 C.85 6.9 6.05 1.7 12.5 1.7 C18.95 1.7 24.15 6.9 24.15 13.4 C24.15 16.3 23.3 19.1 21.6 22.4Z" fill="url(#mg)" stroke="#1d68ad" stroke-width="1"/><path d="M12.5 37.8 L4.5 22 C2.9 18.9 2.05 16.2 2.05 13.5 C2.05 7.6 6.7 2.9 12.5 2.9 C18.3 2.9 22.95 7.6 22.95 13.5 C22.95 16.2 22.1 18.9 20.5 22Z" fill="none" stroke="#fff" stroke-opacity=".12" stroke-width="1"/><circle cx="12.5" cy="13.3" r="4.3" fill="#fff" stroke="#1d68ad" stroke-opacity=".5" stroke-width=".6"/></g>
</defs>
<use href="#world" x="-1024"/><use href="#world"/><use href="#world" x="1024"/>
<path fill="none" stroke="#cf93cf" stroke-opacity=".85" stroke-width=".65" stroke-linejoin="round" d="M162.2 71.2L162.2 134.8L167.6 134.8L172.2 142.6L177.9 137.6L183.9 145.4L188.1 154.9L193.2 157.5L193.5 162.0L191.8 164.5M212.6 190.8L292.7 190.8L293.6 189.2L294.2 192.1L300.8 193.8L305.0 194.2L309.0 195.1L311.9 193.8L321.8 199.7L324.1 201.3L325.5 203.0L325.8 204.2L328.6 206.2L328.9 215.4L326.9 218.8L328.6 220.4L338.6 216.1L338.3 213.8L344.8 212.8L346.3 210.7L350.8 207.5L359.9 207.5L362.2 205.4L363.6 201.8L364.2 200.5L366.5 197.4L369.0 197.8L370.4 199.1L370.4 204.6L371.6 206.7L372.7 208.1M230.2 253.3L237.0 252.6L236.8 253.3L247.6 257.2L255.5 257.2L255.5 255.6L260.4 255.6L264.9 259.6L266.1 262.6L269.8 264.8L272.0 262.2L274.9 262.2L278.0 267.1L280.3 269.7L281.4 273.2L286.8 274.6M301.0 309.4L302.5 304.7L306.2 304.7L303.3 301.3L304.5 301.3L304.5 299.6L309.7 299.6L309.6 305.0M309.7 299.6L312.1 297.5M595.2 142.1L596.9 138.2L598.9 134.8L598.3 130.7L597.9 126.5L598.3 122.9L597.4 116.7L600.3 112.2L603.1 108.9L604.5 103.6L604.8 98.0L607.4 96.6L609.9 90.1L609.1 87.9L614.2 84.2L614.8 80.3L620.2 81.1L621.8 75.9M621.8 75.9L624.7 74.0L627.0 78.5L629.3 79.3L631.3 77.7L634.1 79.9L636.4 77.2L637.1 70.7L638.7 68.7L642.7 67.5L644.1 69.9L646.6 74.0L645.6 76.0M645.6 76.0L648.9 71.2L651.1 69.9M621.8 75.9L624.7 81.1L629.9 84.9L630.6 89.4L631.3 93.0L632.0 100.1M645.6 76.0L644.4 80.3L648.3 86.4L646.1 92.3L648.9 100.8L647.8 106.9L650.3 111.5L648.6 114.1L653.2 119.2L648.6 125.9L646.4 128.9L642.4 133.3M642.9 139.6L641.2 143.2L641.5 148.6L642.4 151.2L643.5 157.2L651.2 160.0L650.9 164.0L656.3 170.8L652.6 172.2L653.8 176.9L661.1 181.0L664.3 184.6L671.4 186.8L677.4 188.1L676.5 195.1L672.0 198.9M632.7 148.3L637.3 148.6L641.2 149.9M623.2 157.5L628.4 155.9L634.4 156.9L639.0 159.5L643.5 157.2M639.0 159.5L636.7 163.5L635.8 166.4L630.1 168.1M628.2 166.2L628.4 163.5L623.9 161.7M653.8 176.9L650.1 180.6L642.1 179.6L635.3 177.8L630.4 179.4M627.6 190.3L631.9 184.2L630.4 179.4L629.3 176.0L631.3 172.7L630.1 168.1L628.2 166.2L619.6 165.7M603.7 168.4L604.3 171.7L604.8 174.6L605.1 177.3L606.0 181.9L605.4 182.6M606.0 181.9L611.4 184.6L616.8 188.6L627.6 190.3M597.7 185.1L605.4 182.6M597.7 185.1L602.6 191.6L603.1 192.5L611.5 192.5L616.8 188.6M582.9 171.2L583.5 176.4L580.4 178.3L580.7 183.0L580.7 185.9L581.5 188.6L586.6 190.8L584.9 196.8M570.6 181.5L575.2 185.1L579.8 188.4L581.5 188.6M573.0 180.3L575.5 180.1L579.8 181.2L580.7 183.0M584.9 196.8L590.6 197.2L593.2 197.0L600.3 197.2L599.7 194.2L602.6 191.6M584.9 196.8L580.4 202.6L583.2 203.8L582.4 207.1L584.9 211.1L584.6 212.2M583.2 203.8L587.5 202.2L593.2 200.9L598.0 199.3L602.3 201.3M590.6 197.2L590.3 199.1L593.2 199.9M538.0 219.6L540.0 218.8L544.5 219.4L545.7 220.9L543.7 223.0L543.4 227.9L542.3 232.3L543.4 233.7L542.3 237.0M558.3 214.0L565.3 216.3L568.1 217.5L572.3 217.5M602.3 201.3L609.1 199.9L611.5 192.5M611.5 192.5L612.2 195.1L616.8 195.7L621.6 192.9L626.3 193.4L627.6 190.3M609.1 199.9L610.2 201.3L613.4 203.8L617.1 203.8L621.0 202.8L623.6 201.8L626.3 195.1L626.3 193.4M626.3 195.1L634.1 196.3L639.0 194.0L643.5 200.9L643.5 205.6L647.8 206.2M639.0 194.0L641.8 193.1L646.4 197.2L648.9 201.8M621.0 202.8L624.2 208.3L627.3 208.7L627.9 210.7L627.0 215.4L628.6 221.7M627.9 210.7L633.0 212.4L640.1 211.1L644.7 212.4M628.6 221.7L633.0 221.3L637.3 220.4L638.4 222.1L639.0 221.7L642.9 219.2M638.4 222.1L637.4 224.0M602.0 205.4L606.8 205.4L610.2 201.3M617.1 203.8L617.3 207.9L618.5 207.9L619.1 211.4L617.9 213.4L621.0 216.0L620.5 217.1L621.6 218.5L624.7 218.3L627.0 218.1M608.1 206.7L608.8 210.7L613.4 215.4L615.9 217.5M608.1 206.7L617.3 207.9M618.5 219.8L620.5 217.1M618.5 219.8L621.6 221.9L623.0 223.6L622.2 226.4L620.2 227.9M623.0 223.6L628.6 221.7M681.5 221.1L685.0 220.8L687.0 222.6L687.6 226.4L690.7 227.9L689.6 232.6L690.7 237.0L683.9 237.3L677.1 238.4L671.4 238.4L667.7 238.4L667.4 240.5L665.4 241.6M677.1 213.8L685.6 214.6L691.3 216.5L695.3 219.6L699.3 222.3L701.5 219.8M687.0 222.6L691.3 221.9L695.3 219.6M691.3 221.9L693.0 223.8L695.9 229.7L695.6 230.8M690.7 227.9L695.6 230.8L699.8 227.9L702.4 232.5M690.7 237.0L692.4 241.2L694.7 241.9L692.4 248.2L694.1 250.9L699.5 255.6L699.8 259.9L701.4 261.7M683.9 237.3L679.9 246.8L673.7 250.2L668.0 253.9L664.8 252.6L664.6 250.7L666.8 246.4L665.4 241.6M673.7 250.2L674.8 254.4L678.2 255.3L683.1 257.9L690.4 264.2L695.6 264.5L699.0 266.5L701.0 266.3M695.6 264.5L698.1 261.2L699.8 261.6M668.0 253.9L674.8 254.4M674.8 254.4L668.5 256.6L671.4 259.9L670.0 261.6L666.0 264.2L662.7 263.7M662.7 263.7L660.7 257.6M662.7 263.1L664.3 256.6L664.6 252.9M710.1 279.8L712.9 284.2L720.3 284.8L721.6 286.9L719.7 293.0L711.2 296.0L701.8 298.4L695.0 301.3L688.7 300.8L686.2 303.2L685.0 303.8M721.6 286.9L720.3 284.8L722.0 280.7L722.6 277.9L723.6 277.8M711.2 296.0L714.3 303.1M716.6 236.4L723.2 233.7L726.3 233.4L732.0 235.9L737.4 239.1L737.1 243.7L735.4 247.8L736.5 256.6L739.1 258.3L736.4 262.1L738.8 264.8L741.9 267.4L741.9 270.6L743.4 272.2L738.5 277.0M736.4 262.1L741.1 263.5L745.6 263.5L751.9 261.9L752.2 258.6L760.4 255.3L761.0 251.6L762.4 248.2L765.5 246.8L767.0 241.2L775.5 237.7L776.3 236.8M737.4 239.1L742.2 243.3L746.8 240.2L752.5 236.4L756.7 237.7L761.0 235.5L763.0 235.7L766.7 234.1L766.7 238.4L771.8 236.1L776.3 236.8M712.5 220.2L716.9 218.1L721.2 221.9L722.6 221.9L725.4 221.9L725.7 219.2L729.7 216.7L734.0 218.5L734.3 221.5L739.4 222.6L740.8 226.8L745.9 230.6L752.5 234.3L752.5 236.4M722.6 221.9L722.6 207.5L730.0 205.2L736.8 210.3L739.7 213.4L747.9 212.6L751.3 215.6L751.0 219.2L753.0 222.5L757.0 223.0L759.6 221.7L763.5 218.8L765.3 218.3L763.0 220.8L767.2 221.1M765.3 218.3L772.4 217.3L772.7 215.4L778.3 216.0L788.6 216.1L791.4 218.5M756.7 237.7L756.2 228.6L760.4 226.0L763.8 226.8L764.4 223.4L770.9 223.8L767.2 221.1M763.8 226.8L761.0 228.6L772.9 228.6L773.2 231.9L776.3 232.5L776.3 236.8M703.2 202.0L701.3 200.9L702.7 200.1L700.4 196.3L697.8 195.9L695.6 193.4L697.0 189.9L696.7 186.8L701.0 187.3L702.1 183.7L707.8 178.7L712.6 179.6L715.5 180.1L718.3 181.9L721.7 183.7L727.7 181.5L732.5 183.7L737.9 182.8L738.8 180.6L734.0 177.3L737.1 175.7L736.8 168.4L743.1 166.9L748.8 166.2L757.3 163.0L764.7 161.5L765.8 167.4L772.1 168.1L774.9 170.3L780.9 166.4L784.9 171.2L791.1 182.8L800.5 181.9L805.6 188.1L811.6 190.3M811.6 190.3L807.1 193.4L806.5 199.1L799.4 198.4L797.4 205.2L790.6 207.9L793.1 214.8L791.4 218.5M813.0 189.9L818.4 186.8L825.8 182.8L831.5 183.9L840.1 187.5L842.9 183.9L844.6 176.9L854.0 180.6L854.3 183.7L866.8 185.1L872.2 189.2L878.2 190.1L884.4 188.4L888.4 185.1L895.2 187.0L891.8 194.4L897.2 196.5L900.4 195.1L904.3 200.5L897.2 200.9L895.0 202.2L892.4 205.4L889.0 205.8L886.4 208.5L881.6 207.1L880.2 210.1L881.7 212.6L877.3 216.1L874.2 217.5L867.7 220.0L862.0 220.8L858.3 220.2L853.4 217.3L846.3 217.1L837.5 216.3L834.4 210.3L829.3 207.5L821.9 206.7L821.3 200.9L815.3 194.2L813.0 189.9M895.2 187.0L898.7 188.6L902.4 185.9L902.6 183.7L906.9 177.3L904.6 173.6L907.2 171.2L914.9 170.1L920.6 172.4L926.3 187.3L931.7 189.0L934.8 191.4L935.9 196.3L940.5 196.1L946.4 193.8L944.7 198.4L941.9 207.1L938.5 206.2L936.8 211.2L935.6 216.0L934.8 217.5M934.8 217.5L932.8 215.4L927.7 219.2L924.3 220.0L917.1 226.4M923.7 234.8L928.5 231.9M757.3 282.0L765.3 279.5L762.7 274.8L762.7 269.0L770.7 264.5L775.5 257.9L775.2 252.6L774.1 250.5L775.2 245.4L784.6 243.0M776.3 236.8L779.5 241.6L784.6 243.0L787.7 247.1L786.3 252.9L788.6 253.3L787.4 257.3L793.7 260.9L791.1 265.5L800.2 270.0L805.9 271.9L813.9 272.9L814.0 268.4L807.9 268.1L799.4 263.9L793.7 260.9M814.0 268.4L816.2 270.3L819.0 267.1L824.1 268.7L825.3 271.6L818.7 272.1L816.2 270.3M824.1 268.7L831.2 264.5L836.7 263.5L840.2 267.4M813.9 272.9L816.7 273.8L818.7 276.7L826.1 277.6L823.0 280.7L822.7 282.0L823.9 284.0L825.8 281.7L826.7 289.1L825.8 290.7M813.9 272.9L813.9 277.6L816.2 279.8L815.6 282.9L816.5 286.3L816.7 287.8M826.7 287.2L828.7 280.7L832.7 276.4L834.1 272.4L839.5 271.0L840.2 267.4L844.0 269.4L844.0 274.8L840.9 278.2L841.5 280.7L844.6 283.2L845.5 286.5L848.3 288.5L851.2 288.3L852.6 285.5L854.9 284.6L862.8 282.9L866.8 284.3L866.5 286.9L870.5 288.3M851.2 288.3L848.0 292.0L849.5 294.5L851.2 294.5L850.6 299.3L853.7 298.4L855.4 299.5L859.1 298.1L861.4 300.8L861.3 303.5M848.0 292.0L842.1 293.6L841.2 297.5L841.5 300.2L843.8 304.7M853.7 285.7L856.3 290.6L860.8 291.8L859.1 294.8L862.5 297.2L866.5 302.2L868.8 305.0M557.0 244.4L558.3 246.4L558.5 250.7L559.9 254.6L553.1 256.1L553.1 258.6L549.1 261.6L538.6 265.8L538.6 269.2L525.8 269.2M538.6 269.2L538.6 270.3L549.6 277.6L566.7 289.7L572.7 296.0L575.2 295.6L575.4 302.6L574.4 306.5M538.6 270.3L538.6 274.5L529.2 274.5L529.2 282.5L526.3 283.8L526.0 289.0L514.9 289.0M538.6 270.3L544.8 277.6L547.4 303.5L548.2 304.1L530.6 306.2L528.6 308.7L522.6 303.2L516.4 304.7M587.8 238.0L586.6 245.7L584.6 248.5L588.9 254.6L590.3 260.9L591.5 264.8L591.5 272.9L590.0 274.2L591.7 279.2L597.4 282.3L603.7 285.1L606.0 283.8L631.6 294.5L631.6 293.0L634.4 293.0L634.4 286.9L668.3 286.9M590.3 260.9L592.6 258.6L592.6 255.9L596.2 253.4L596.2 251.1M634.4 286.9L634.4 264.2L633.6 261.2L634.8 256.1M597.4 282.3L584.6 290.4L579.8 294.7L575.2 295.6M606.0 283.8L608.5 291.8L607.4 302.3L603.1 305.9L601.7 309.7M631.6 294.5L631.6 305.9L628.4 306.5L625.9 313.8M668.3 286.9L668.5 290.0L673.1 299.0M673.1 299.0L668.5 301.7L667.1 307.9L666.8 309.7"/>
<path fill="#aad3df" stroke="#9ccadb" stroke-width=".5" d="M301.3 200.3L305.0 199.7L308.7 199.9L311.9 197.8L314.4 201.3L317.3 201.5L321.5 201.3L322.7 199.7L321.8 196.3L318.7 195.1L317.5 191.8L312.4 191.0L311.6 193.4L309.3 195.1L305.9 197.2ZM313.3 215.4L314.1 220.0L315.8 220.6L317.8 217.7L317.5 212.6L318.7 208.3L320.4 206.2L321.5 204.2L318.1 203.6L315.0 206.2L313.0 209.1L314.4 210.3ZM322.4 204.0L326.1 207.1L326.1 211.4L324.7 212.6L328.6 215.2L330.9 213.0L331.2 208.3L334.9 209.5L336.0 207.9L333.5 203.8L330.1 202.8L324.9 202.6ZM282.0 168.9L285.1 168.4L287.4 175.0L289.4 181.9L287.7 184.6L286.5 179.6L283.1 175.5L280.8 171.2ZM207.7 98.0L212.0 104.2L217.7 105.6L220.5 101.5L223.4 103.6L227.7 100.8L223.4 96.6L228.5 94.5L223.4 91.6L217.7 92.3L213.4 95.9ZM229.9 129.5L234.8 131.6L240.5 129.5L246.1 124.7L253.3 120.1L249.0 119.5L241.9 122.9L237.6 122.0L233.3 119.8L234.8 124.7L230.5 127.1ZM698.4 204.6L702.7 201.8L708.4 199.7L710.9 199.5L714.1 200.5L714.6 206.2L712.6 205.8L709.8 206.2L708.4 209.5L706.4 210.3L708.9 212.8L709.2 214.6L712.6 216.9L713.2 220.4L716.3 218.8L718.9 221.9L716.3 224.2L713.8 223.0L713.8 226.8L714.1 229.0L716.3 232.3L716.6 236.2L716.9 238.0L712.6 238.9L708.4 238.7L705.2 236.1L702.4 232.6L702.3 231.4L703.8 229.0L706.7 225.5L704.1 224.2L702.7 221.1L700.7 219.0L698.4 215.4L698.1 212.2L696.4 209.1L697.0 206.2ZM858.3 179.2L861.4 178.0L865.4 174.6L870.5 170.3L874.8 165.0L875.9 159.5L874.2 158.7L871.9 164.5L867.7 170.3L863.4 175.0L860.0 178.0ZM651.2 136.8L655.7 135.3L657.2 131.9L654.3 127.1L650.1 127.7L648.6 131.9L651.5 135.3ZM664.0 131.3L667.1 129.5L665.1 123.5L661.4 119.8L661.1 124.7L662.9 128.9ZM598.6 144.3L600.8 145.4L603.1 142.1L601.7 139.9L599.7 141.5ZM846.3 27.1L854.9 26.1L862.0 21.7L853.4 23.9Z"/>
<use href="#sh" x="623.6" y="75.8"/>
<use href="#sh" x="516.5" y="102.4"/>
<use href="#sh" x="521.6" y="102.5"/>
<use href="#sh" x="647.5" y="132.8"/>
<use href="#sh" x="611.5" y="153.5"/>
<use href="#sh" x="554.9" y="156.9"/>
<use href="#sh" x="670.7" y="157.9"/>
<use href="#sh" x="597.2" y="158.9"/>
<use href="#sh" x="556.3" y="159.9"/>
<use href="#sh" x="617.7" y="164.6"/>
<use href="#sh" x="553.0" y="164.8"/>
<use href="#sh" x="538.2" y="165.2"/>
<use href="#sh" x="562.8" y="166.2"/>
<use href="#sh" x="589.7" y="168.7"/>
<use href="#sh" x="543.7" y="170.8"/>
<use href="#sh" x="562.8" y="171.1"/>
<use href="#sh" x="539.3" y="175.4"/>
<use href="#sh" x="574.0" y="175.7"/>
<use href="#sh" x="568.8" y="177.0"/>
<use href="#sh" x="580.6" y="179.3"/>
<use href="#sh" x="562.8" y="181.0"/>
<use href="#sh" x="602.7" y="182.6"/>
<use href="#sh" x="566.1" y="183.3"/>
<use href="#sh" x="548.6" y="185.1"/>
<use href="#sh" x="653.7" y="186.7"/>
<use href="#sh" x="294.5" y="188.8"/>
<use href="#sh" x="560.5" y="189.2"/>
<use href="#sh" x="572.7" y="193.2"/>
<use href="#sh" x="557.6" y="195.9"/>
<use href="#sh" x="570.7" y="196.2"/>
<use href="#sh" x="675.5" y="205.3"/>
<use href="#sh" x="620.6" y="205.8"/>
<use href="#sh" x="590.7" y="206.5"/>
<use href="#sh" x="564.9" y="207.5"/>
<use href="#sh" x="592.8" y="211.0"/>
<use href="#sh" x="575.9" y="212.2"/>
<use href="#sh" x="641.7" y="220.8"/>
<use href="#sh" x="568.8" y="221.6"/>
<use href="#mk" x="611.1" y="35.0"/>
<use href="#mk" x="504.0" y="61.6"/>
<use href="#mk" x="509.1" y="61.7"/>
<use href="#mk" x="635.0" y="92.0"/>
<use href="#mk" x="599.0" y="112.7"/>
<use href="#mk" x="542.4" y="116.1"/>
<use href="#mk" x="658.2" y="117.1"/>
<use href="#mk" x="584.7" y="118.1"/>
<use href="#mk" x="543.8" y="119.1"/>
<use href="#mk" x="605.2" y="123.8"/>
<use href="#mk" x="540.5" y="124.0"/>
<use href="#mk" x="525.7" y="124.4"/>
<use href="#mk" x="550.3" y="125.4"/>
<use href="#mk" x="577.2" y="127.9"/>
<use href="#mk" x="531.2" y="130.0"/>
<use href="#mk" x="550.3" y="130.3"/>
<use href="#mk" x="526.8" y="134.6"/>
<use href="#mk" x="561.5" y="134.9"/>
<use href="#mk" x="556.3" y="136.2"/>
<use href="#mk" x="568.1" y="138.5"/>
<use href="#mk" x="550.3" y="140.2"/>
<use href="#mk" x="590.2" y="141.8"/>
<use href="#mk" x="553.6" y="142.5"/>
<use href="#mk" x="536.1" y="144.3"/>
<use href="#mk" x="641.2" y="145.9"/>
<use href="#mk" x="282.0" y="148.0"/>
<use href="#mk" x="548.0" y="148.4"/>
<use href="#mk" x="560.2" y="152.4"/>
<use href="#mk" x="545.1" y="155.1"/>
<use href="#mk" x="558.2" y="155.4"/>
<use href="#mk" x="663.0" y="164.5"/>
<use href="#mk" x="608.1" y="165.0"/>
<use href="#mk" x="578.2" y="165.7"/>
<use href="#mk" x="552.4" y="166.7"/>
<use href="#mk" x="580.3" y="170.2"/>
<use href="#mk" x="563.4" y="171.4"/>
<use href="#mk" x="629.2" y="180.0"/>
<use href="#mk" x="556.3" y="180.8"/>
</svg>
<div class="lf-bar lf-zoom"><a class="zin">+</a><a class="zout">&#8722;</a></div>
<div class="lf-bar lf-layers"><svg width="26" height="27" viewBox="0 0 26 27"><path d="M0 17.5 L12.9 9.3 26 17.5 12.9 25.7Z" fill="#c2c2c2"/><path d="M0 17.5 L12.9 25.7 26 17.5" fill="none" stroke="#7c7c7c" stroke-width="1"/><path d="M0 13.4 L12.9 5.2 26 13.4 12.9 21.6Z" fill="#d8d8d8"/><path d="M0 13.4 L12.9 21.6 26 13.4" fill="none" stroke="#7c7c7c" stroke-width="1"/><path d="M0 9.3 L12.9 1.1 26 9.3 12.9 17.5Z" fill="#f0f0f0"/><path d="M12.9 5 L5.6 9.7 12.9 14.4 20.3 9.7Z" fill="#e0e0e0"/><path d="M0 9.3 L12.9 17.5 26 9.3" fill="none" stroke="#6c6c6c" stroke-width="1"/></svg></div>
<div class="lf-attr"><a>Leaflet</a> | Map data &copy; <a>OpenStreetMap</a> contributors</div>
</div>
<table id="log">
<colgroup><col style="width:132px"><col style="width:92px"><col style="width:123px"><col style="width:100px"><col style="width:88px"><col style="width:90px"><col style="width:105px"></colgroup>
<tr><th>Date</th><th>Time</th><th style="letter-spacing:-.4px">Call</th><th style="letter-spacing:.65px">Mode</th><th>Sent</th><th style="letter-spacing:-.6px">Recv</th><th style="letter-spacing:-.35px">Band</th></tr>
<tr class="s f"><td class="d">23/07/19</td><td class="t">15:26</td><td><a style="letter-spacing:-0.35px">IU1KIZ</a></td><td class="fm">FM</td><td>59</td><td>59</td><td class="b">AO-85</td></tr>
<tr class=""><td class="d">23/07/19</td><td class="t">15:24</td><td><a style="letter-spacing:-0.24px">M7ABX</a></td><td class="fm">FM</td><td>55</td><td>59</td><td class="b">AO-85</td></tr>
<tr class="s"><td class="d">23/07/19</td><td class="t">15:23</td><td><a style="letter-spacing:-0.24px">GØPNM</a></td><td class="fm">FM</td><td>59</td><td>59</td><td class="b">AO-85</td></tr>
<tr class=""><td class="d">23/07/19</td><td class="t">15:22</td><td><a style="letter-spacing:-1.56px">F4EPP</a></td><td class="fm">FM</td><td>59</td><td>59</td><td class="b">AO-85</td></tr>
<tr class="s"><td class="d">23/07/19</td><td class="t">09:45</td><td><a style="letter-spacing:-1.07px">UR3CTB</a></td><td class="fm">FM</td><td>59</td><td>59</td><td class="b">SO-50</td></tr>
<tr class=""><td class="d">23/07/19</td><td class="t">09:43</td><td><a style="letter-spacing:-0.88px">F8DZY</a></td><td class="fm">FM</td><td>59</td><td>59</td><td class="b">SO-50</td></tr>
<tr class="s"><td class="d">23/07/19</td><td class="t">09:42</td><td><a style="letter-spacing:-0.86px">F8AIP</a></td><td class="fm">FM</td><td>59</td><td>59</td><td class="b">SO-50</td></tr>
<tr class=""><td class="d">22/07/19</td><td class="t">11:26</td><td><a style="letter-spacing:-0.24px">M7KRN</a></td><td class="fm">FM</td><td>59</td><td>59</td><td class="b">AO-92</td></tr>
<tr class="s"><td class="d">22/07/19</td><td class="t">11:24</td><td><a style="letter-spacing:-0.7px">PE1NIL</a></td><td class="fm">FM</td><td>59</td><td>59</td><td class="b">AO-92</td></tr>
<tr class=""><td class="d">22/07/19</td><td class="t">11:00</td><td><a style="letter-spacing:-0.66px">G4RWI</a></td><td class="fm">FM</td><td>59</td><td>59</td><td class="b">SO-50</td></tr>
<tr class="s"><td class="d">22/07/19</td><td class="t">10:58</td><td><a style="letter-spacing:-0.75px">2EØHPI</a></td><td class="fm">FM</td><td>59</td><td>59</td><td class="b">SO-50</td></tr>
</table>
<table class="side" style="top:451px">
<colgroup><col style="width:190px"><col style="width:160px"></colgroup>
<tr class="s"><td colspan="2"><svg class="ic ch" width="16.5" height="12.4" viewBox="0 0 17 13"><path d="M0 0h2.2v10.8H17V13H0z M4.3 6.2h2v3.4h-2z M7.5 2.2h2v7.4h-2z M10.7 4.2h2v5.4h-2z M13.9 1h2v8.6h-2z" fill="#212529"/></svg><span style="margin-left:2.5px;letter-spacing:-.2px">QSOs Breakdown</span></td></tr>
<tr><td>Total</td><td>3397</td></tr>
<tr class="s"><td>Year</td><td>1298</td></tr>
<tr><td style="letter-spacing:.7px">Month</td><td>187</td></tr>
</table>
<table class="side" style="top:663px">
<colgroup><col style="width:215px"><col style="width:135px"></colgroup>
<tr class="s"><td colspan="2"><svg class="ic gl" width="16" height="16" viewBox="0 0 16 16"><circle cx="8" cy="8" r="7.75" fill="#212529"/><path d="M5.3 2.9 L7.4 2.1 L9.2 1.9 L11.6 3.1 L13.3 5.4 L12.2 6.9 L10.4 6 L11.2 4.7 L9.6 4.9 L8.2 6.6 L6.4 7 L5.6 5.6 L6.2 4.2Z M4.7 10 C5.4 8.2 8.2 7.6 10.3 8.5 L13.7 10.3 C12.9 12.7 10.6 14.4 8.1 14.4 C6.2 14.2 4.8 12.5 4.7 10Z" fill="#fff"/></svg><span style="margin-left:2.8px;letter-spacing:.06px">Countries Breakdown</span></td></tr>
<tr><td>Worked</td><td>69</td></tr>
<tr class="s"><td>Needed</td><td>271</td></tr>
<tr><td colspan="2" class="e"></td></tr>
</table>
<table class="side" style="top:851px">
<colgroup><col style="width:245px"><col style="width:105px"></colgroup>
<tr class="s"><td colspan="2"><svg class="ic en" width="16.3" height="12" viewBox="0 0 16 12"><path d="M1.5 0h13A1.5 1.5 0 0 1 16 1.5v.7L8.9 7.4a1.5 1.5 0 0 1-1.8 0L0 2.2v-.7A1.5 1.5 0 0 1 1.5 0Z M0 4.1l6.2 4.5a3 3 0 0 0 3.6 0L16 4.1v6.4a1.5 1.5 0 0 1-1.5 1.5h-13A1.5 1.5 0 0 1 0 10.500Z" fill="#212529"/></svg><span style="margin-left:3.5px;letter-spacing:-.52px">QSL Cards</span></td></tr>
<tr><td>Sent</td><td>10</td></tr>
<tr class="s"><td style="letter-spacing:-.35px">Received</td><td>13</td></tr>
<tr><td style="letter-spacing:-.18px">Requested</td><td>0</td></tr>
</table>
</body>
</html>
